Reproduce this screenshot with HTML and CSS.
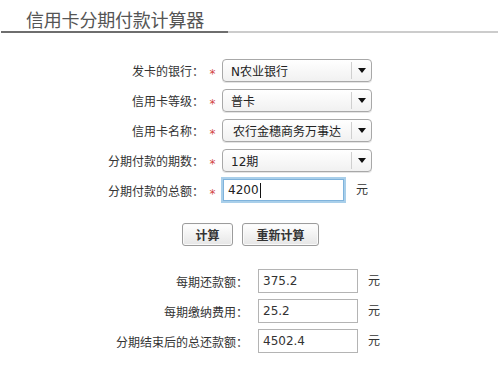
FILE: index.html
```html
<!DOCTYPE html>
<html lang="zh-CN">
<head>
<meta charset="utf-8">
<title>信用卡分期付款计算器</title>
<link rel="stylesheet" href="styles.css">
</head>
<body>
<div class="page">
  <div class="title-bar"><h1 class="title">信用卡分期付款计算器</h1></div>
  <div class="rule"><span class="rule-dark"></span><span class="rule-light"></span></div>

  <div class="form">
    <div class="row">
      <span class="label">发卡的银行：</span><span class="star">*</span>
      <div class="select"><span class="sel-text"><span class="latin">N</span>农业银行</span><span class="sel-btn"><span class="arrow"></span></span></div>
    </div>
    <div class="row">
      <span class="label">信用卡等级：</span><span class="star">*</span>
      <div class="select"><span class="sel-text">普卡</span><span class="sel-btn"><span class="arrow"></span></span></div>
    </div>
    <div class="row">
      <span class="label">信用卡名称：</span><span class="star">*</span>
      <div class="select"><span class="sel-text sel-center">农行金穗商务万事达</span><span class="sel-btn"><span class="arrow"></span></span></div>
    </div>
    <div class="row">
      <span class="label">分期付款的期数：</span><span class="star">*</span>
      <div class="select"><span class="sel-text"><span class="latin">12</span>期</span><span class="sel-btn"><span class="arrow"></span></span></div>
    </div>
    <div class="row row-input">
      <span class="label">分期付款的总额：</span><span class="star">*</span>
      <div class="amount"><span class="amount-text">4200</span><span class="caret"></span></div>
      <span class="unit">元</span>
    </div>
  </div>

  <div class="buttons">
    <button class="btn btn-calc">计算</button>
    <button class="btn btn-reset">重新计算</button>
  </div>

  <div class="results">
    <div class="res-row">
      <span class="res-label">每期还款额：</span>
      <div class="res-box">375.2</div>
      <span class="res-unit">元</span>
    </div>
    <div class="res-row">
      <span class="res-label">每期缴纳费用：</span>
      <div class="res-box">25.2</div>
      <span class="res-unit">元</span>
    </div>
    <div class="res-row">
      <span class="res-label">分期结束后的总还款额：</span>
      <div class="res-box">4502.4</div>
      <span class="res-unit">元</span>
    </div>
  </div>
</div>
</body>
</html>
```

FILE: styles.css
```css
html, body {
  margin: 0;
  padding: 0;
  background: #ffffff;
}

body {
  font-family: "Noto Sans CJK SC", "DejaVu Sans", sans-serif;
  font-size: 12px;
  color: #333333;
}

.page {
  width: 498px;
  height: 370px;
  overflow: hidden;
}

.title-bar {
  padding: 9px 0 0 26px;
  height: 22px;
}

.title {
  margin: 0;
  font-size: 18px;
  line-height: 21px;
  font-weight: normal;
  color: #555555;
  letter-spacing: -0.2px;
}

.rule {
  display: flex;
  height: 2px;
  margin-left: 1px;
}

.rule-dark {
  width: 227px;
  background: #6e6e6e;
}

.rule-light {
  flex: 1;
  background: #cccccc;
}

.form {
  margin-top: 26px;
}

.row {
  display: flex;
  align-items: center;
  height: 23px;
  margin-bottom: 7px;
}

.row-input {
  height: 26px;
  margin-top: -2px;
}

.label {
  width: 204px;
  text-align: right;
  color: #333333;
  line-height: 23px;
}

.star {
  width: 17px;
  height: 23px;
  text-align: center;
  color: #d24545;
  font-family: "DejaVu Sans", sans-serif;
  font-size: 12px;
  line-height: 23px;
  padding-top: 4px;
  box-sizing: border-box;
}

.select {
  box-sizing: border-box;
  width: 150px;
  height: 23px;
  margin-left: 1px;
  display: flex;
  border: 1px solid #a8a8a8;
  border-radius: 4px;
  background: linear-gradient(#ffffff, #f1f1f1);
  box-shadow: 0 1px 0 #e4e4e4;
}

.sel-text {
  flex: 1;
  padding-left: 8px;
  line-height: 21px;
  color: #222222;
  font-family: "Noto Sans CJK SC", sans-serif;
  font-size: 12px;
  white-space: nowrap;
  overflow: hidden;
}

.latin {
  font-family: "DejaVu Sans", sans-serif;
}

.sel-center {
  padding-left: 10px;
}

.sel-btn {
  width: 19px;
  border-left: 1px solid #cfcfcf;
  margin: 2px 0;
  display: flex;
  align-items: center;
  justify-content: center;
}

.arrow {
  width: 0;
  height: 0;
  border-left: 4px solid transparent;
  border-right: 4px solid transparent;
  border-top: 5px solid #111111;
}

.amount {
  box-sizing: border-box;
  width: 125px;
  height: 26px;
  display: flex;
  align-items: center;
  border: 2px solid #a9cfea;
  outline: 1px solid #7fb3dc;
  outline-offset: -3px;
  padding-left: 5px;
  background: #ffffff;
}

.amount-text {
  font-family: "DejaVu Sans", sans-serif;
  font-size: 12px;
  color: #222222;
}

.caret {
  width: 1px;
  height: 15px;
  background: #111111;
  margin-left: 1px;
}

.unit {
  margin-left: 10px;
  color: #333333;
  padding-bottom: 4px;
}

.buttons {
  display: flex;
  gap: 9px;
  padding-left: 182px;
  margin-top: 20px;
}

.btn {
  box-sizing: border-box;
  height: 23px;
  padding: 0;
  border: 1px solid #9c9c9c;
  border-radius: 3px;
  background: linear-gradient(#ffffff, #e6e6e6);
  box-shadow: inset 0 0 0 1px #fafafa;
  font-family: "Noto Sans CJK SC", sans-serif;
  font-size: 12px;
  font-weight: bold;
  color: #333333;
  line-height: 21px;
}

.btn-calc {
  width: 51px;
}

.btn-reset {
  width: 77px;
}

.results {
  margin-top: 23px;
}

.res-row {
  display: flex;
  align-items: center;
  height: 24px;
  margin-bottom: 6px;
}

.res-label {
  width: 248px;
  text-align: right;
}

.res-box {
  box-sizing: border-box;
  width: 100px;
  height: 24px;
  margin-left: 10px;
  border: 1px solid #b4b4b4;
  padding-left: 4px;
  line-height: 22px;
  font-family: "DejaVu Sans", sans-serif;
  font-size: 12px;
  color: #333333;
}

.res-unit {
  margin-left: 10px;
  padding-bottom: 4px;
}
```
